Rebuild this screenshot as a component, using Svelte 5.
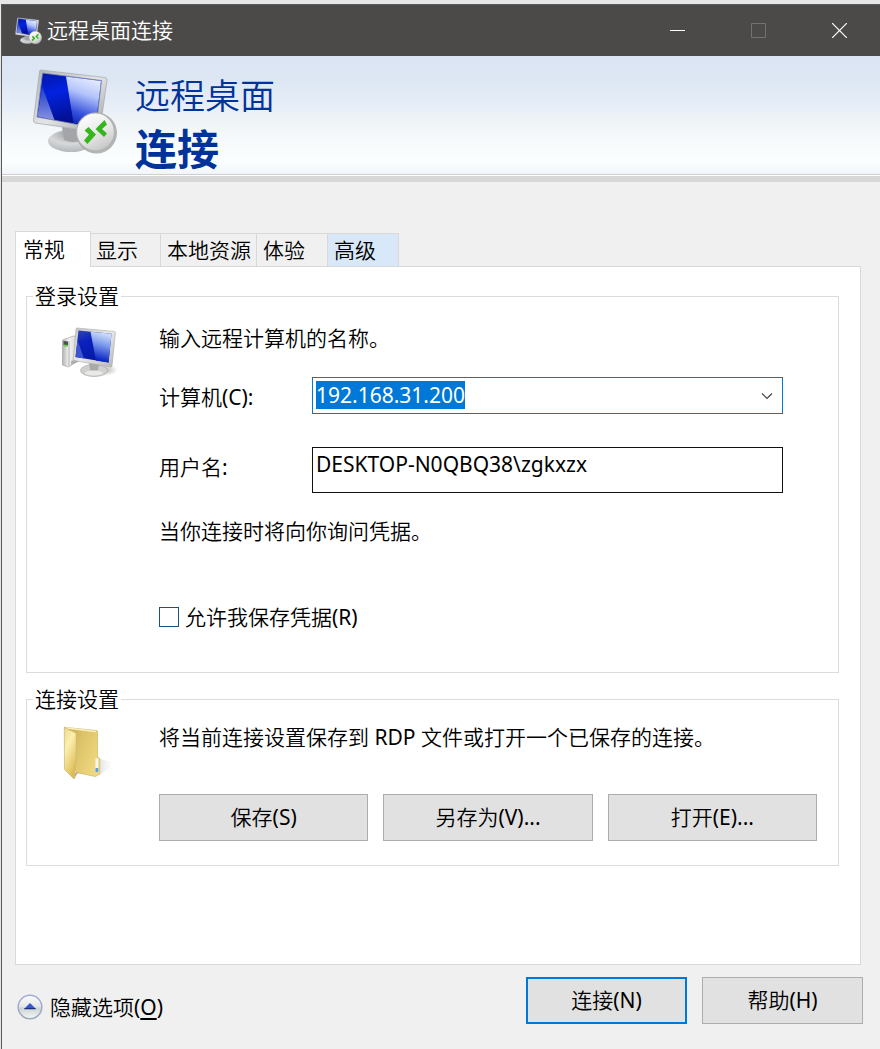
<script>
  import { onMount } from 'svelte';

  const tabs = ['常规', '显示', '本地资源', '体验', '高级'];
  let active = $state('常规');
  let computer = $state('192.168.31.200');
  let user = $state('DESKTOP-N0QBQ38\\zgkxzx');
  let saveCredentials = $state(false);
  let computerBox;

  onMount(() => {
    computerBox.focus();
    computerBox.select();
  });
</script>

{#snippet remoteIcon(cls, id)}
  <svg class={cls} viewBox="32 66 88 92" aria-hidden="true">
    <defs>
      <linearGradient id="{id}-frame" x1="0" y1="0" x2="1" y2="1">
        <stop offset="0" stop-color="#b0b2b4" /><stop offset=".5" stop-color="#e4e4e4" /><stop offset="1" stop-color="#9c9ea0" />
      </linearGradient>
      <linearGradient id="{id}-blue" x1="0" y1="0" x2=".35" y2="1">
        <stop offset="0" stop-color="#0216a4" /><stop offset=".4" stop-color="#0222e0" /><stop offset="1" stop-color="#040c80" />
      </linearGradient>
      <linearGradient id="{id}-shine" x1=".65" y1="0" x2=".4" y2="1">
        <stop offset="0" stop-color="#e6eeff" /><stop offset=".35" stop-color="#b4c4fb" /><stop offset=".75" stop-color="#3450dc" /><stop offset="1" stop-color="#0a22b8" />
      </linearGradient>
      <linearGradient id="{id}-corner" x1="0" y1="0" x2="0" y2="1">
        <stop offset="0" stop-color="#2038c8" /><stop offset="1" stop-color="#8492e0" />
      </linearGradient>
      <radialGradient id="{id}-stand" cx=".5" cy=".15" r=".8">
        <stop offset="0" stop-color="#97999c" /><stop offset=".6" stop-color="#d6d8da" /><stop offset="1" stop-color="#b9bcbf" />
      </radialGradient>
      <linearGradient id="{id}-disc" x1=".2" y1="0" x2=".7" y2="1">
        <stop offset="0" stop-color="#ffffff" /><stop offset=".55" stop-color="#e8e8e8" /><stop offset="1" stop-color="#c4c4c4" />
      </linearGradient>
    </defs>
    <ellipse cx="71" cy="141" rx="23" ry="11" fill="url(#{id}-stand)" />
    <path d="M62 127l22 3-2 10q-9 4-18 0z" fill="#a3a5a8" />
    <path d="M40.500 70L105 77.500q2.500.3 2 2.500l-7 50q-.4 2.500-3 2L35 123q-2-.5-1.500-3l6-48.500q.2-1.500 1-1.500z" fill="url(#{id}-frame)" stroke="#a2a8ae" stroke-width=".7" />
    <path d="M42.500 73L101.500 80.500 96 128 37 117z" fill="url(#{id}-blue)" stroke="#7f8cb0" stroke-width=".8" />
    <path d="M66 76.500L101 81 95.500 127 73.500 123z" fill="url(#{id}-shine)" />
    <path d="M42 86L54.500 120 37.500 116.500z" fill="url(#{id}-corner)" />
    <circle cx="96.500" cy="133" r="20.500" fill="#a2a2a2" opacity=".8" />
    <circle cx="95.500" cy="132" r="19" fill="url(#{id}-disc)" stroke="#b2b2b2" stroke-width="1.200" />
    <path d="M84.500 130.500l4-3.500 7.500 7.500-8.500 9.500-3.500-3.500 5-6z" fill="#37b51f" />
    <path d="M104.500 120l2.500 4.500-5 4.500 5 4.500-3 3.500-8.500-8z" fill="#37b51f" />
  </svg>
{/snippet}

<div class="window">
  <header class="titlebar">
    {@render remoteIcon('app-icon', 'small')}
    <span class="caption">远程桌面连接</span>
    <div class="window-controls">
      <button type="button" aria-label="最小化">
        <svg viewBox="0 0 15 15"><path d="M0 7.500h15" stroke="#fff" /></svg>
      </button>
      <button type="button" aria-label="最大化" disabled>
        <svg viewBox="0 0 15 15"><path d="M.5.5h14v14H.5z" fill="none" stroke="#73726f" /></svg>
      </button>
      <button type="button" aria-label="关闭">
        <svg viewBox="0 0 15 15"><path d="M0 0l15 15M15 0L0 15" stroke="#fff" stroke-width="1.200" /></svg>
      </button>
    </div>
  </header>

  <div class="banner">
    {@render remoteIcon('banner-icon', 'large')}
    <h1>远程桌面<strong>连接</strong></h1>
  </div>

  <main>
    <div class="tabs" role="tablist">
      {#each tabs as tab}
        <button
          type="button"
          role="tab"
          class:active={active === tab}
          class:hot={tab === '高级'}
          aria-selected={active === tab}
          onclick={() => (active = tab)}>{tab}</button>
      {/each}
    </div>

    <div class="panel" role="tabpanel">
      <fieldset class="login">
        <legend>登录设置</legend>
        <div class="group">
          <svg class="group-icon" viewBox="60 324 60 56" aria-hidden="true">
            <defs>
              <linearGradient id="pc-frame" x1="0" y1="0" x2="1" y2="1">
                <stop offset="0" stop-color="#c3c3c3" /><stop offset=".5" stop-color="#e9e9e7" /><stop offset="1" stop-color="#b4b4b2" />
              </linearGradient>
              <linearGradient id="pc-blue" x1="0" y1="0" x2=".4" y2="1">
                <stop offset="0" stop-color="#3346b0" /><stop offset=".4" stop-color="#0a20bc" /><stop offset="1" stop-color="#0719a4" />
              </linearGradient>
              <linearGradient id="pc-shine" x1=".6" y1="0" x2=".4" y2="1">
                <stop offset="0" stop-color="#d6e5fb" /><stop offset=".4" stop-color="#7f9cee" /><stop offset=".9" stop-color="#0c28c4" />
              </linearGradient>
              <linearGradient id="pc-tower" x1="0" y1="0" x2="1" y2="0">
                <stop offset="0" stop-color="#b2b2b2" /><stop offset=".35" stop-color="#f4f4f4" /><stop offset="1" stop-color="#c8c8c8" />
              </linearGradient>
              <radialGradient id="pc-shadow">
                <stop offset="0" stop-color="#777" stop-opacity=".65" /><stop offset="1" stop-color="#999" stop-opacity="0" />
              </radialGradient>
            </defs>
            <ellipse cx="104" cy="370" rx="14" ry="6" fill="url(#pc-shadow)" />
            <path d="M62.500 340l11-4 7 1v22l-12 8-6-2z" fill="url(#pc-tower)" stroke="#a8a8a8" stroke-width=".7" />
            <path d="M69 341v25" stroke="#a0a0a0" stroke-width=".8" />
            <path d="M63.500 341l4.500.5v4l-4.500-.5z" fill="#4c5054" />
            <path d="M64 345.500l3.500.3" stroke="#62d63a" stroke-width="1.800" />
            <path d="M71 361l9-3v3l-9 4z" fill="#8d8d8d" opacity=".6" />
            <ellipse cx="94" cy="370.500" rx="13.500" ry="6" fill="#d0d0ce" stroke="#aaa" stroke-width=".7" />
            <path d="M89 362l10 2-1 6q-4 2-8 0z" fill="#a9a9a7" />
            <ellipse cx="94" cy="373" rx="9" ry="2.500" fill="#e9e9e7" />
            <path d="M77 328l37.500 3.500q1 .2.900 1.200L112 366q-.2 1.300-1.500 1L74 360.500q-1-.2-.8-1.300L76 329q.1-1 1-1z" fill="url(#pc-frame)" stroke="#a9a9a7" stroke-width=".6" />
            <path d="M78.500 330.500L111.500 333.700 108.500 362.500 75.500 357z" fill="url(#pc-blue)" />
            <path d="M90.500 331.700L111.500 333.700 108.500 362.500 96 360.400z" fill="url(#pc-shine)" />
            <path d="M77.500 340L84 358.400 75.500 357z" fill="#3c54d0" />
          </svg>
          <div class="fields">
            <p>输入远程计算机的名称。</p>
            <div class="row computer">
              <label for="computer">计算机(C):</label>
              <div class="combo">
                <input id="computer" type="text" autocomplete="off" spellcheck="false" bind:value={computer} bind:this={computerBox} />
                <button type="button" aria-label="显示计算机列表">
                  <svg viewBox="0 0 12 8"><path d="M1 1.500l5 5 5-5" fill="none" stroke="#444" stroke-width="1.200" /></svg>
                </button>
              </div>
            </div>
            <div class="row user">
              <label for="user">用户名:</label>
              <input id="user" type="text" autocomplete="off" spellcheck="false" bind:value={user} />
            </div>
            <p>当你连接时将向你询问凭据。</p>
            <label class="check">
              <input type="checkbox" bind:checked={saveCredentials} />
              允许我保存凭据(R)
            </label>
          </div>
        </div>
      </fieldset>

      <fieldset class="connection">
        <legend>连接设置</legend>
        <div class="group">
          <svg class="group-icon" viewBox="60 724 60 56" aria-hidden="true">
            <defs>
              <linearGradient id="folder-front" x1="0" y1="0" x2=".5" y2="1">
                <stop offset="0" stop-color="#efd98a" /><stop offset=".4" stop-color="#fbf0ae" /><stop offset="1" stop-color="#dfbd55" />
              </linearGradient>
              <linearGradient id="folder-back" x1="0" y1="0" x2="1" y2=".6">
                <stop offset="0" stop-color="#c9a94c" /><stop offset=".45" stop-color="#dcc268" /><stop offset="1" stop-color="#efd87f" />
              </linearGradient>
              <linearGradient id="folder-shadow" x1="0" y1="0" x2="1" y2="0">
                <stop offset="0" stop-color="#777" stop-opacity=".7" /><stop offset="1" stop-color="#aaa" stop-opacity="0" />
              </linearGradient>
            </defs>
            <path d="M74 779l4-5 18 2.500q10-2 17-13l-14-4-22 10z" fill="url(#folder-shadow)" />
            <path d="M64.500 728.300L96.500 731.500q1 .2 1 1.300V758l2.300 1.500v15.500l-4.500 2.500-19-4z" fill="url(#folder-back)" stroke="#cdb666" stroke-width=".7" />
            <path d="M66 729L96 732.500" stroke="#fbf0bd" stroke-width="1.500" />
            <path d="M95.500 759.500h2.800v13.500h-2.800z" fill="#f7f8f6" />
            <path d="M95.500 769h2.800v4h-2.800z" fill="#53a0e4" />
            <path d="M64.300 728.500L75 733.500q1.200.7 1.200 2V762l-1.200 1.500v15l-1 1.500-9.500-9.500z" fill="url(#folder-front)" stroke="#c9b573" stroke-width=".7" />
          </svg>
          <div class="fields">
            <p>将当前连接设置保存到 RDP 文件或打开一个已保存的连接。</p>
            <div class="actions">
              <button type="button" class="push">保存(S)</button>
              <button type="button" class="push">另存为(V)...</button>
              <button type="button" class="push">打开(E)...</button>
            </div>
          </div>
        </div>
      </fieldset>
    </div>
  </main>

  <footer>
    <button type="button" class="toggle">
      <svg viewBox="0 0 26 26" aria-hidden="true">
        <defs>
          <linearGradient id="orb" x1="0" y1="0" x2="0" y2="1">
            <stop offset="0" stop-color="#fdfdfd" /><stop offset=".48" stop-color="#e3e7e5" /><stop offset=".55" stop-color="#ccd3d0" /><stop offset="1" stop-color="#f4faf6" />
          </linearGradient>
          <linearGradient id="orb-ring" x1="0" y1="0" x2="0" y2="1">
            <stop offset="0" stop-color="#a3aadf" /><stop offset="1" stop-color="#a0a9b8" />
          </linearGradient>
        </defs>
        <circle cx="13" cy="13" r="11.800" fill="url(#orb)" stroke="url(#orb-ring)" stroke-width="1.500" />
        <path d="M13 9l6 6H7z" fill="#3858cf" /><path d="M8 14h10l1 1.200H7z" fill="#1d2f80" />
      </svg>
      <span>隐藏选项(<u>O</u>)</span>
    </button>
    <button type="button" class="push default">连接(N)</button>
    <button type="button" class="push">帮助(H)</button>
  </footer>
</div>

<style>
  :global(body) {
    margin: 0;
    background: #e6e6e6;
  }

  .window,
  .window button,
  .window input {
    font-family: 'Noto Sans', 'Noto Sans CJK SC DemiLight', 'Noto Sans CJK SC', sans-serif;
    font-size: 21px;
    line-height: 28px;
    color: #000;
  }

  .window {
    box-sizing: border-box;
    min-height: calc(100vh - 4px);
    margin: 4px 0 0 1px;
    border-left: 1px solid #585858;
    background: #f0f0f0;
    display: flex;
    flex-direction: column;
  }

  button {
    margin: 0;
    padding: 0;
    border: 0;
    background: none;
  }

  svg {
    display: block;
    flex: none;
  }

  p {
    margin: 0;
  }

  .titlebar {
    box-sizing: border-box;
    height: 52px;
    border-top: 1px solid #5b5b5b;
    background: #4c4a48;
    display: flex;
    align-items: center;
    padding-left: 13px;
  }

  .app-icon {
    width: 28px;
    height: 30px;
  }

  .caption {
    flex: 1;
    margin-left: 4px;
    padding-bottom: 2px;
    color: #fff;
  }

  .window-controls {
    display: flex;
    align-self: stretch;
  }

  .window-controls button {
    width: 81px;
    display: flex;
    align-items: center;
    justify-content: center;
  }

  .window-controls svg {
    width: 15px;
    height: 15px;
  }

  .banner {
    box-sizing: border-box;
    height: 126px;
    border-bottom: 6px solid #d7d7d7;
    background: linear-gradient(#dbe4f4, #dde7f3 20%, #e7eef8 43%, #edf2f6 50%, #f6fafc 70%, #fafefe 88%, #f2f6fa 98%, #cfcfcf 98%, #cfcfcf 99%, #fff 99%);
    display: flex;
    align-items: flex-start;
    gap: 15px;
    padding: 10px 30px;
  }

  .banner-icon {
    width: 88px;
    height: 92px;
  }

  h1 {
    margin: 4px 0 0;
    font-size: 35px;
    line-height: 51px;
    font-weight: 400;
    color: #003399;
  }

  h1 strong {
    display: block;
    font-family: 'Noto Sans CJK SC', sans-serif;
    font-size: 42px;
    font-weight: 700;
  }

  main {
    flex: 1;
    display: flex;
    flex-direction: column;
    padding: 49px 19px 12px 13px;
  }

  .tabs {
    display: flex;
    align-items: flex-end;
  }

  .tabs button {
    box-sizing: border-box;
    min-width: 71px;
    height: 33px;
    padding: 0 5px 0 6px;
    border: 1px solid #d9d9d9;
    border-width: 1px 1px 0 0;
    text-align: left;
  }

  .tabs .hot {
    background: #d8e8f8;
  }

  .tabs .active {
    width: 76px;
    height: 36px;
    margin: 0 -1px -1px 0;
    padding: 0 7px 1px;
    border-left-width: 1px;
    background: #fff;
    position: relative;
  }

  .panel {
    flex: 1;
    border: 1px solid #d9d9d9;
    background: #fff;
    padding: 15px 21px 15px 10px;
  }

  fieldset {
    min-width: 0;
    margin: 0;
    padding: 0 21px 0 6px;
    border: 1px solid #dcdcdc;
  }

  legend {
    padding: 0 2px;
  }

  .group {
    display: grid;
    grid-template-columns: 99px 1fr;
    padding-left: 27px;
  }

  .group-icon {
    width: 60px;
    height: 56px;
  }

  .login .group {
    padding-top: 14px;
    padding-bottom: 41px;
  }

  .login {
    margin-bottom: 12px;
  }

  .row {
    display: grid;
    grid-template-columns: 153px 1fr;
    align-items: center;
    padding-right: 34px;
  }

  .row label {
    align-self: start;
    padding-top: 6px;
  }

  .computer {
    margin-top: 25px;
  }

  .user {
    margin: 33px 0 24px;
  }

  .combo {
    box-sizing: border-box;
    height: 37px;
    border: 1px solid #0078d7;
    display: flex;
    padding: 3px;
  }

  .combo input {
    flex: 1;
    min-width: 0;
    height: 28px;
    padding: 0;
    border: 0;
    outline: 0;
  }

  .combo input::selection {
    background: #0078d7;
    color: #fff;
  }

  .combo button {
    width: 24px;
    display: flex;
    align-items: center;
    justify-content: center;
  }

  .combo svg {
    width: 12px;
    height: 8px;
  }

  #user {
    box-sizing: border-box;
    width: 100%;
    height: 46px;
    padding: 2px 3px 14px;
    border: 1px solid #111;
    outline: 0;
  }

  .check {
    display: flex;
    align-items: center;
    gap: 6px;
    margin-top: 58px;
  }

  .check input {
    appearance: none;
    box-sizing: border-box;
    width: 20px;
    height: 20px;
    margin: 0;
    border: 1px solid #1c5180;
    background: #fff;
  }

  .check input:checked {
    box-shadow: inset 0 0 0 4px #fff;
    background: #1c5180;
  }

  .connection .group {
    padding-top: 10px;
    padding-bottom: 24px;
  }

  .push {
    box-sizing: border-box;
    height: 47px;
    padding-bottom: 2px;
    border: 1px solid #adadad;
    background: #e1e1e1;
  }

  .actions {
    display: grid;
    grid-template-columns: repeat(3, 1fr);
    gap: 15px;
    margin-top: 43px;
  }

  footer {
    display: flex;
    align-items: center;
    gap: 15px;
    padding: 0 17px 25px 15px;
  }

  footer .push {
    width: 161px;
  }

  .default {
    border: 2px solid #0078d7;
  }

  .toggle {
    display: flex;
    align-items: center;
    gap: 7px;
    margin-right: auto;
    padding-top: 13px;
  }

  .toggle svg {
    width: 26px;
    height: 26px;
  }

  u {
    text-underline-offset: 3px;
  }
</style>
